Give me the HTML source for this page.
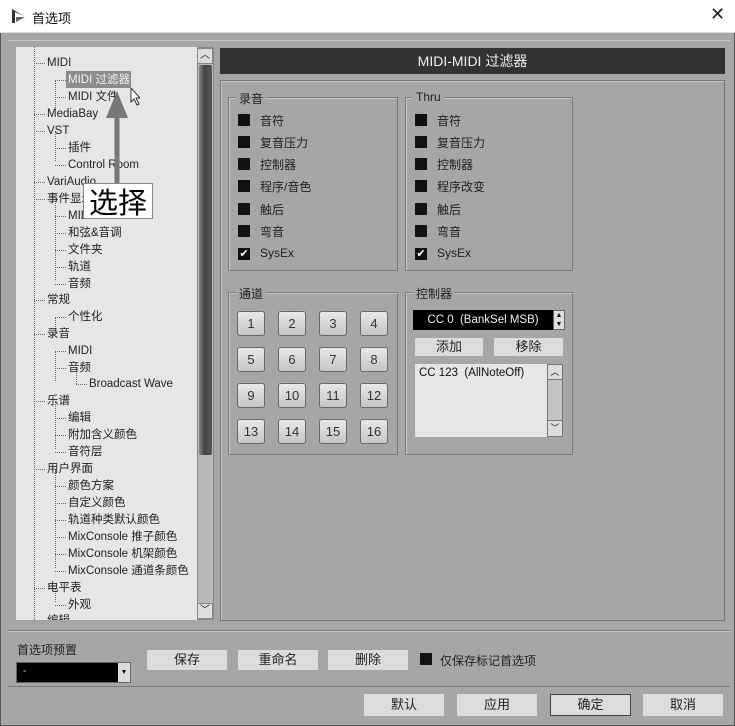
<!DOCTYPE html><html><head><meta charset="utf-8"><style>
*{margin:0;padding:0;box-sizing:border-box}
body{width:735px;height:726px;background:#a6a6a6;font-family:"Liberation Sans","Noto Sans CJK SC",sans-serif;font-size:11.5px;color:#111;position:relative;overflow:hidden}
.a{position:absolute}
.btn{position:absolute;background:#dcdcdc;text-align:center;font-size:13px;color:#222}
.cb{position:absolute;width:12px;height:12px;background:#111}
.grp{position:absolute;border:1px solid #7a7a7a;box-shadow:1px 1px 0 #c4c4c4 inset}
.gl{position:absolute;top:-8px;left:7px;background:#a6a6a6;padding:0 3px;font-size:12px;color:#222}
.ck{position:absolute;left:31px;font-size:12px;color:#222}
.nb{position:absolute;width:28px;height:25px;border:1px solid #6a6a6a;border-radius:3px;background:linear-gradient(#e8e8e8,#c6c6c6);text-align:center;line-height:23px;font-size:13px;color:#333}
.t{position:absolute;white-space:nowrap;line-height:17px;font-size:11.5px;color:#222}
.t:before{content:"";position:absolute;left:-13px;top:8px;width:11px;border-top:1px dotted #666}
.v{position:absolute;border-left:1px dotted #666;width:0}
</style></head><body>
<div class="a" style="left:0;top:0;width:735px;height:33px;background:#fff;border-bottom:1px solid #ddd"></div>
<svg class="a" style="left:11px;top:8px" width="16" height="16"><path d="M1 1 L1 15 L4 15 L4 4 L13 8 Z" fill="#333"/><path d="M5 9 L14 9 L5 14Z" fill="#666"/></svg>
<div class="a" style="left:32px;top:8px;font-size:13px;color:#111">首选项</div>
<div class="a" style="left:710px;top:4px;font-size:18px;color:#222">✕</div>
<div class="a" style="left:0;top:33px;width:735px;height:693px;border:1px solid #555;border-top:none"></div>
<div class="a" style="left:8px;top:40px;width:722px;height:590px;border-top:1px solid #c8c8c8"></div>
<!-- tree -->
<div class="a" style="left:16px;top:47px;width:181px;height:573px;background:#e6e6e6;overflow:hidden">
<div class="v" style="left:18px;top:0;height:573px"></div>
<div class="v" style="left:39px;top:33px;height:30px"></div>
<div class="v" style="left:39px;top:84px;height:30px"></div>
<div class="v" style="left:39px;top:152px;height:81px"></div>
<div class="v" style="left:39px;top:270px;height:12px"></div>
<div class="v" style="left:39px;top:304px;height:30px"></div>
<div class="v" style="left:60px;top:321px;height:16px"></div>
<div class="v" style="left:39px;top:355px;height:47px"></div>
<div class="v" style="left:39px;top:423px;height:98px"></div>
<div class="v" style="left:39px;top:542px;height:13px"></div>
<div class="a" style="left:50px;top:24px;width:65px;height:17px;background:#8c8c8c"></div>
<div class="t" style="left:31px;top:8px">MIDI</div>
<div class="t" style="left:52px;top:25px;color:#f2f2f2">MIDI 过滤器</div>
<div class="t" style="left:52px;top:42px">MIDI 文件</div>
<div class="t" style="left:31px;top:59px">MediaBay</div>
<div class="t" style="left:31px;top:76px">VST</div>
<div class="t" style="left:52px;top:93px">插件</div>
<div class="t" style="left:52px;top:110px">Control Room</div>
<div class="t" style="left:31px;top:127px">VariAudio</div>
<div class="t" style="left:31px;top:144px">事件显示</div>
<div class="t" style="left:52px;top:161px">MIDI</div>
<div class="t" style="left:52px;top:178px">和弦&amp;音调</div>
<div class="t" style="left:52px;top:195px">文件夹</div>
<div class="t" style="left:52px;top:212px">轨道</div>
<div class="t" style="left:52px;top:229px">音频</div>
<div class="t" style="left:31px;top:245px">常规</div>
<div class="t" style="left:52px;top:262px">个性化</div>
<div class="t" style="left:31px;top:279px">录音</div>
<div class="t" style="left:52px;top:296px">MIDI</div>
<div class="t" style="left:52px;top:313px">音频</div>
<div class="t" style="left:73px;top:329px">Broadcast Wave</div>
<div class="t" style="left:31px;top:346px">乐谱</div>
<div class="t" style="left:52px;top:363px">编辑</div>
<div class="t" style="left:52px;top:380px">附加含义颜色</div>
<div class="t" style="left:52px;top:397px">音符层</div>
<div class="t" style="left:31px;top:414px">用户界面</div>
<div class="t" style="left:52px;top:431px">颜色方案</div>
<div class="t" style="left:52px;top:448px">自定义颜色</div>
<div class="t" style="left:52px;top:465px">轨道种类默认颜色</div>
<div class="t" style="left:52px;top:482px">MixConsole 推子颜色</div>
<div class="t" style="left:52px;top:499px">MixConsole 机架颜色</div>
<div class="t" style="left:52px;top:516px">MixConsole 通道条颜色</div>
<div class="t" style="left:31px;top:533px">电平表</div>
<div class="t" style="left:52px;top:550px">外观</div>
<div class="t" style="left:31px;top:566px">编辑</div>
</div>
<!-- scrollbar -->
<div class="a" style="left:197px;top:47px;width:17px;height:573px;background:#b8b8b8;border:1px solid #888"></div>
<div class="a" style="left:197px;top:48px;width:16px;height:16px;background:#ddd;border:1px solid #888;font-size:10px;text-align:center;line-height:14px">︿</div>
<div class="a" style="left:199px;top:65px;width:13px;height:390px;background:linear-gradient(90deg,#888,#444 40%,#555);border-radius:2px"></div>
<div class="a" style="left:197px;top:603px;width:16px;height:16px;background:#ddd;border:1px solid #888;font-size:10px;text-align:center;line-height:14px">﹀</div>
<!-- annotation -->
<svg class="a" style="left:100px;top:88px" width="40" height="100"><line x1="17" y1="25" x2="17" y2="100" stroke="#777" stroke-width="5"/><path d="M17 3 L6 30 L28 30Z" fill="#777"/><path d="M31 0 L31 14 L34 11 L37 17 L39 16 L36 10 L40 10Z" fill="#fff" stroke="#333" stroke-width="1"/></svg>
<div class="a" style="left:83px;top:183px;width:70px;height:36px;background:#fff;border:1px solid #888;font-size:29px;line-height:34px;text-align:center;color:#000;font-family:'Noto Sans CJK SC',sans-serif">选择</div>
<!-- right -->
<div class="a" style="left:220px;top:48px;width:505px;height:26px;background:#333;color:#eee;font-size:14px;text-align:center;line-height:26px">MIDI-MIDI 过滤器</div>
<div class="a" style="left:220px;top:80px;width:505px;height:541px;border:1px solid #777;box-shadow:1px 1px 0 #c4c4c4 inset"></div>
<div class="grp" style="left:228px;top:97px;width:170px;height:174px"><div class="gl">录音</div>
<div class="cb" style="left:9px;top:16px"></div><div class="ck" style="top:14px">音符</div>
<div class="cb" style="left:9px;top:38px"></div><div class="ck" style="top:36px">复音压力</div>
<div class="cb" style="left:9px;top:60px"></div><div class="ck" style="top:58px">控制器</div>
<div class="cb" style="left:9px;top:82px"></div><div class="ck" style="top:80px">程序/音色</div>
<div class="cb" style="left:9px;top:105px"></div><div class="ck" style="top:103px">触后</div>
<div class="cb" style="left:9px;top:127px"></div><div class="ck" style="top:125px">弯音</div>
<div class="cb" style="left:9px;top:150px;color:#fff;font-size:11px;line-height:12px;text-align:center">✔</div><div class="ck" style="top:148px">SysEx</div></div>
<div class="grp" style="left:405px;top:97px;width:168px;height:174px"><div class="gl">Thru</div>
<div class="cb" style="left:9px;top:16px"></div><div class="ck" style="top:14px">音符</div>
<div class="cb" style="left:9px;top:38px"></div><div class="ck" style="top:36px">复音压力</div>
<div class="cb" style="left:9px;top:60px"></div><div class="ck" style="top:58px">控制器</div>
<div class="cb" style="left:9px;top:82px"></div><div class="ck" style="top:80px">程序改变</div>
<div class="cb" style="left:9px;top:105px"></div><div class="ck" style="top:103px">触后</div>
<div class="cb" style="left:9px;top:127px"></div><div class="ck" style="top:125px">弯音</div>
<div class="cb" style="left:9px;top:150px;color:#fff;font-size:11px;line-height:12px;text-align:center">✔</div><div class="ck" style="top:148px">SysEx</div></div>
<div class="grp" style="left:228px;top:292px;width:170px;height:163px"><div class="gl">通道</div>
<div class="nb" style="left:8px;top:18px">1</div><div class="nb" style="left:49px;top:18px">2</div><div class="nb" style="left:90px;top:18px">3</div><div class="nb" style="left:131px;top:18px">4</div>
<div class="nb" style="left:8px;top:54px">5</div><div class="nb" style="left:49px;top:54px">6</div><div class="nb" style="left:90px;top:54px">7</div><div class="nb" style="left:131px;top:54px">8</div>
<div class="nb" style="left:8px;top:90px">9</div><div class="nb" style="left:49px;top:90px">10</div><div class="nb" style="left:90px;top:90px">11</div><div class="nb" style="left:131px;top:90px">12</div>
<div class="nb" style="left:8px;top:126px">13</div><div class="nb" style="left:49px;top:126px">14</div><div class="nb" style="left:90px;top:126px">15</div><div class="nb" style="left:131px;top:126px">16</div></div>
<div class="grp" style="left:405px;top:292px;width:168px;height:163px"><div class="gl">控制器</div></div>
<div class="a" style="left:413px;top:310px;width:140px;height:20px;background:#000;color:#eee;font-size:11.5px;text-align:center;line-height:20px">CC 0 &nbsp;(BankSel MSB)</div>
<div class="a" style="left:553px;top:310px;width:12px;height:20px;background:#ddd;border:1px solid #666;font-size:7px;line-height:9px;text-align:center">▲<br>▼</div>
<div class="btn" style="left:415px;top:338px;width:68px;height:18px;line-height:18px">添加</div>
<div class="btn" style="left:494px;top:338px;width:69px;height:18px;line-height:18px">移除</div>
<div class="a" style="left:415px;top:364px;width:148px;height:73px;background:#e6e6e6;font-size:11.5px;padding:3px 4px">CC 123 &nbsp;(AllNoteOff)</div>
<div class="a" style="left:547px;top:364px;width:16px;height:73px;background:#c4c4c4;border:1px solid #777"></div>
<div class="a" style="left:547px;top:364px;width:16px;height:16px;background:#ddd;border:1px solid #777;font-size:9px;text-align:center;line-height:14px">︿</div>
<div class="a" style="left:547px;top:420px;width:16px;height:17px;background:#ddd;border:1px solid #777;font-size:9px;text-align:center;line-height:15px">﹀</div>
<!-- bottom -->
<div class="a" style="left:8px;top:630px;width:722px;height:1px;background:#7a7a7a"></div>
<div class="a" style="left:8px;top:631px;width:722px;height:1px;background:#c4c4c4"></div>
<div class="a" style="left:17px;top:641px;font-size:12px;color:#222">首选项预置</div>
<div class="a" style="left:16px;top:662px;width:115px;height:21px;background:#000;border:1px solid #666"><span style="color:#ddd;position:absolute;left:6px;top:3px;font-size:10px">-</span><div style="position:absolute;right:0;top:0;width:12px;height:19px;background:#ddd;font-size:7px;line-height:19px;text-align:center">▼</div></div>
<div class="btn" style="left:147px;top:650px;width:80px;height:20px;line-height:20px">保存</div>
<div class="btn" style="left:238px;top:650px;width:80px;height:20px;line-height:20px">重命名</div>
<div class="btn" style="left:328px;top:650px;width:80px;height:20px;line-height:20px">删除</div>
<div class="cb" style="left:420px;top:653px"></div>
<div class="a" style="left:440px;top:652px;font-size:12px;color:#222">仅保存标记首选项</div>
<div class="a" style="left:8px;top:686px;width:722px;height:1px;background:#7a7a7a"></div>
<div class="btn" style="left:364px;top:694px;width:80px;height:22px;line-height:22px">默认</div>
<div class="btn" style="left:457px;top:694px;width:80px;height:22px;line-height:22px">应用</div>
<div class="btn" style="left:550px;top:694px;width:81px;height:22px;line-height:20px;border:1px solid #444">确定</div>
<div class="btn" style="left:643px;top:694px;width:80px;height:22px;line-height:22px">取消</div>
</body></html>
